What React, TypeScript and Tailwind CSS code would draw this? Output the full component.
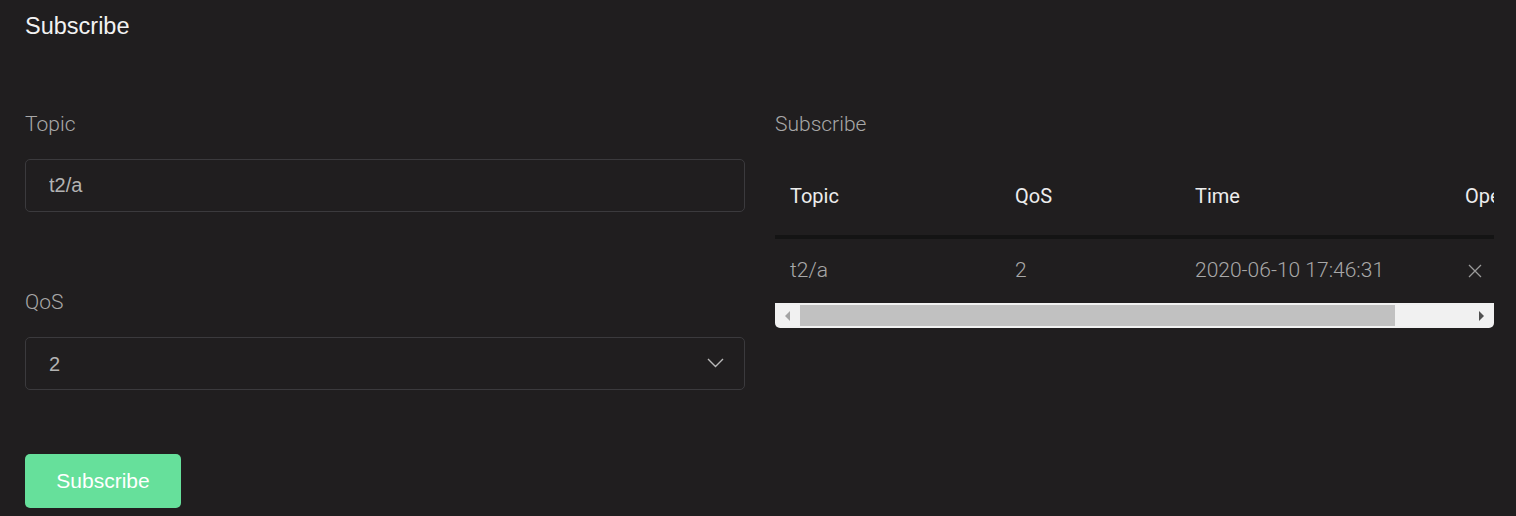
import React, { useState } from 'react'

interface Sub {
  topic: string
  qos: number
  time: string
}

const roboto = { fontFamily: 'Roboto, "Liberation Sans", sans-serif' }
const arial = { fontFamily: '"Liberation Sans", Arial, sans-serif' }

function App() {
  const [topic, setTopic] = useState('t2/a')
  const [qos, setQos] = useState('2')
  const [subs] = useState<Sub[]>([
    { topic: 't2/a', qos: 2, time: '2020-06-10 17:46:31' },
  ])

  return (
    <div className="min-h-[516px] w-full bg-[#201e1f] text-[#a3a3a3]" style={roboto}>
      <div className="px-[25px] pt-[12px] pb-[70px]">
        <h2 className="text-[23.5px] leading-[28px] text-[#f2f2f2]" style={arial}>Subscribe</h2>
      </div>

      <div className="flex gap-[30px] pl-[25px]">
        {/* form */}
        <div className="w-[720px] shrink-0 flex flex-col">
          <label className="text-[21px] font-light leading-[28px] text-[#a8a8a8]">Topic</label>
          <input
            value={topic}
            onChange={(e) => setTopic(e.target.value)}
            className="mt-[21px] h-[53px] w-full rounded-[5px] border border-[#3b3a3d] bg-transparent px-[23px] text-[20px] text-[#b3b3b3] outline-none"
            style={arial}
          />

          <label className="mt-[76px] text-[21px] font-light leading-[28px] text-[#a8a8a8]">QoS</label>
          <div className="relative mt-[21px] h-[53px] w-full">
            <select
              value={qos}
              onChange={(e) => setQos(e.target.value)}
              className="h-full w-full appearance-none rounded-[5px] border border-[#3b3a3d] bg-transparent px-[23px] text-[20px] text-[#b3b3b3] outline-none"
              style={arial}
            >
              <option value="0">0</option>
              <option value="1">1</option>
              <option value="2">2</option>
            </select>
            <svg
              className="pointer-events-none absolute right-[21px] top-[21px]"
              width="17"
              height="10"
              viewBox="0 0 17 10"
              fill="none"
            >
              <path d="M1 1 L8.5 8.5 L16 1" stroke="#b8b8b8" strokeWidth="1.4" />
            </svg>
          </div>

          <div className="mt-[64px]">
            <button
              className="h-[54px] w-[156px] rounded-[5px] bg-[#66e09b] text-[21px] text-white"
              style={arial}
            >
              Subscribe
            </button>
          </div>
        </div>

        {/* list */}
        <div className="w-[719px] shrink-0 flex flex-col">
          <label className="text-[21px] font-light leading-[28px] text-[#a8a8a8]">Subscribe</label>
          <div className="mt-[21px] w-full overflow-hidden">
            <table className="w-[940px] table-fixed border-separate border-spacing-0 text-left">
              <thead>
                <tr>
                  <th className="h-[80px] w-[225px] border-b-4 border-[#141414] pb-[3px] pl-[15px] text-[20px] font-normal text-[#ededed]">Topic</th>
                  <th className="h-[80px] w-[180px] border-b-4 border-[#141414] pb-[3px] pl-[15px] text-[20px] font-normal text-[#ededed]">QoS</th>
                  <th className="h-[80px] w-[270px] border-b-4 border-[#141414] pb-[3px] pl-[15px] text-[20px] font-normal text-[#ededed]">Time</th>
                  <th className="h-[80px] border-b-4 border-[#141414] pb-[3px] pl-[15px] text-[20px] font-normal text-[#ededed]">Operation</th>
                </tr>
              </thead>
              <tbody>
                {subs.map((s) => (
                  <tr key={s.topic}>
                    <td className="h-[64px] pl-[15px] text-[21px] font-light text-[#a8a8a8]">{s.topic}</td>
                    <td className="h-[64px] pl-[15px] text-[21px] font-light text-[#a8a8a8]">{s.qos}</td>
                    <td className="h-[64px] pl-[15px] text-[21px] font-light text-[#a8a8a8]">{s.time}</td>
                    <td className="h-[64px] pl-[18px]">
                      <svg className="block" width="14" height="14" viewBox="0 0 14 14" fill="none">
                        <path d="M1 1 L13 13 M13 1 L1 13" stroke="#9a9a9a" strokeWidth="1.3" />
                      </svg>
                    </td>
                  </tr>
                ))}
              </tbody>
            </table>
          </div>
          {/* scrollbar */}
          <div className="flex h-[25px] w-full items-center rounded-b-[5px] bg-[#f1f1f1]">
            <div className="flex w-[25px] justify-center">
              <div className="h-0 w-0 border-y-[5px] border-r-[5px] border-y-transparent border-r-[#a3a3a3]" />
            </div>
            <div className="h-[21px] w-[595px] bg-[#c1c1c1]" />
            <div className="flex-1" />
            <div className="flex w-[25px] justify-center">
              <div className="h-0 w-0 border-y-[5px] border-l-[5px] border-y-transparent border-l-[#505050]" />
            </div>
          </div>
        </div>
      </div>
    </div>
  )
}

export default App
